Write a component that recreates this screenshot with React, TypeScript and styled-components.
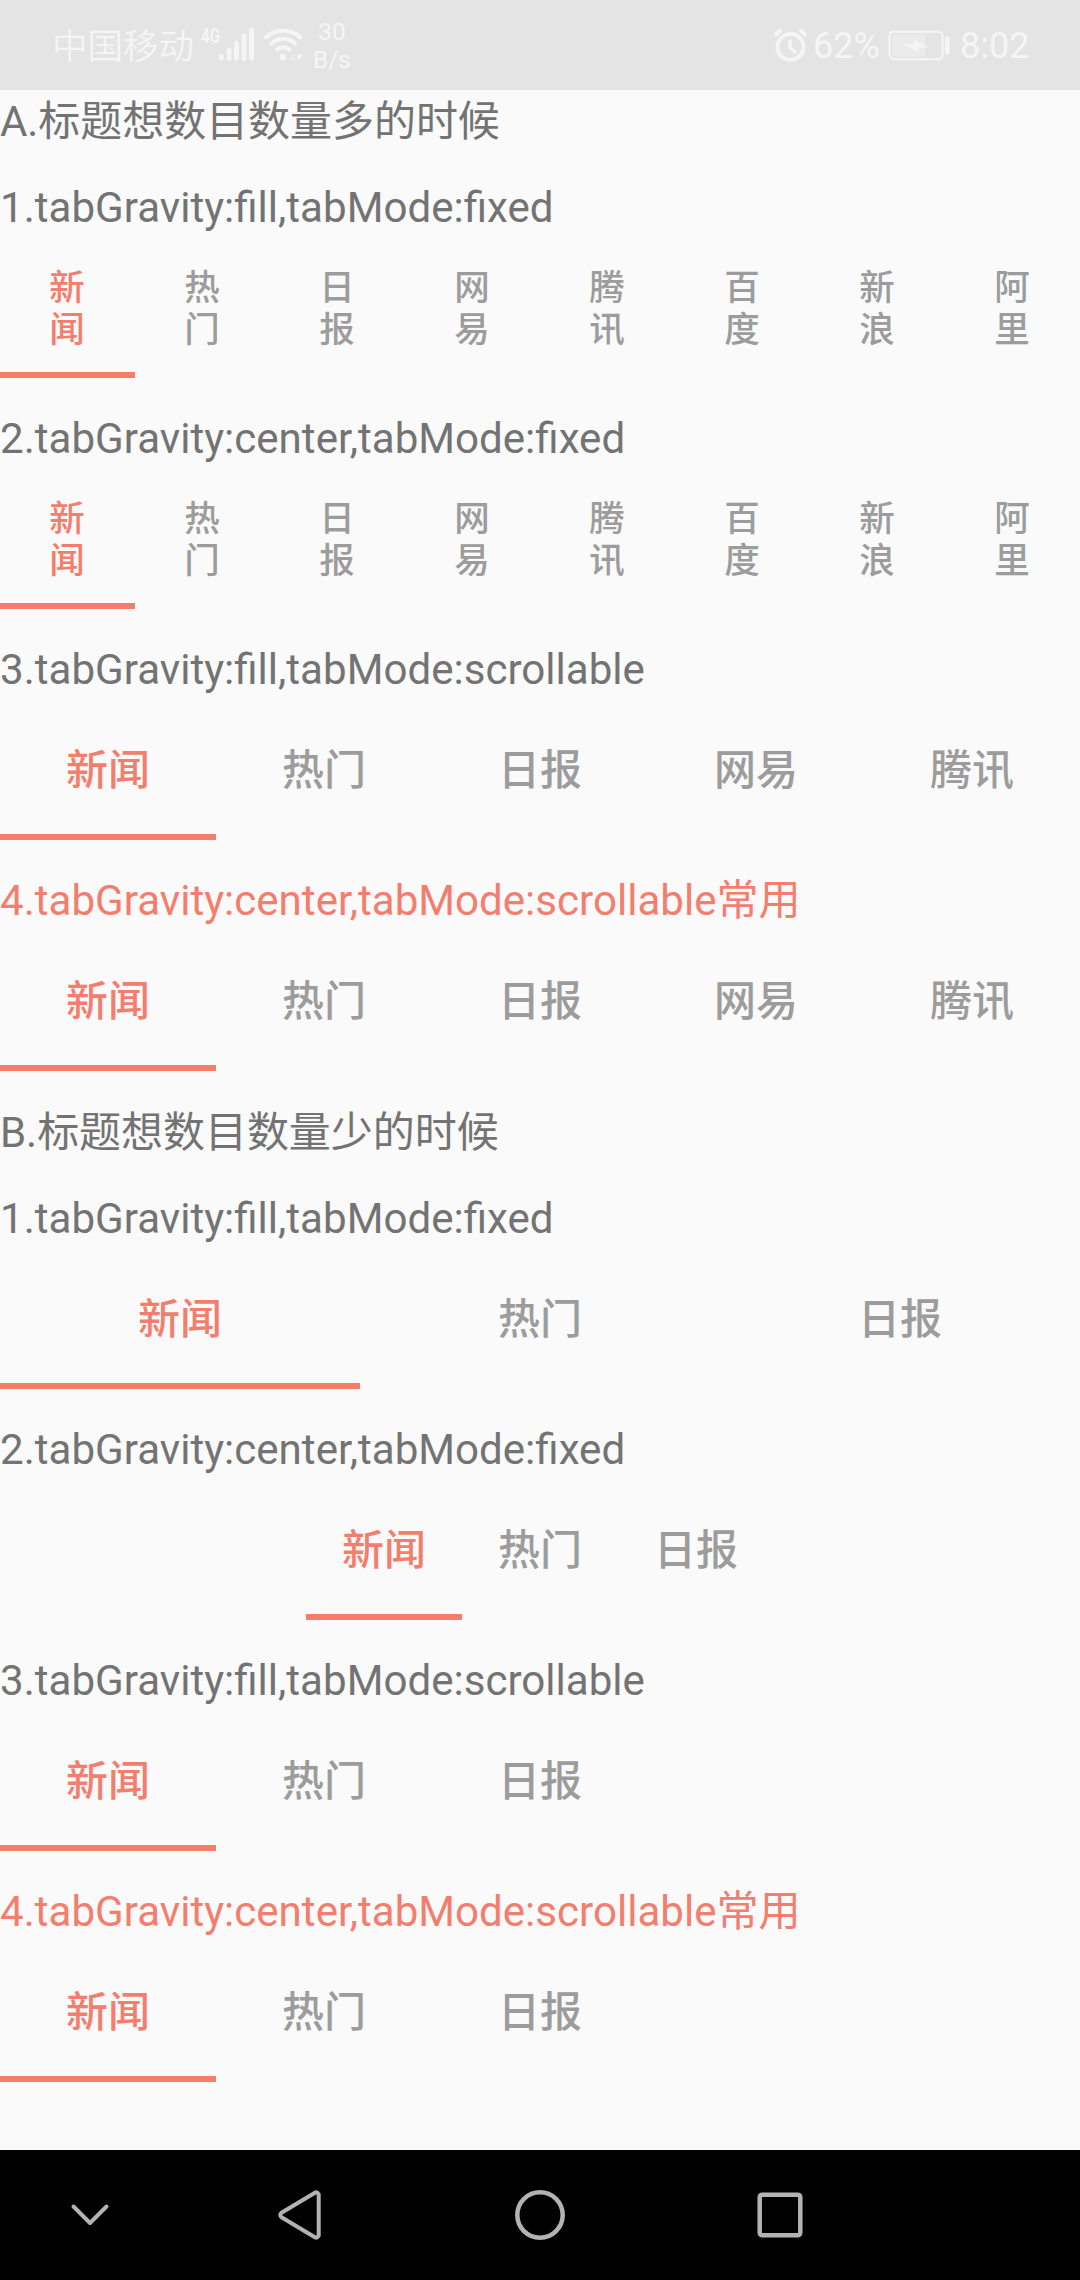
import React from "react";
import styled, { createGlobalStyle } from "styled-components";

const GlobalStyle = createGlobalStyle`
  body {
    margin: 0;
    background: #fafafa;
    font-family: Roboto, "Noto Sans CJK SC", sans-serif;
  }
`;

const Screen = styled.div`
  display: flex;
  flex-direction: column;
  width: 1080px;
  height: 2280px;
  overflow: hidden;
  background: #fafafa;
`;

const StatusBar = styled.header`
  display: flex;
  justify-content: space-between;
  flex: none;
  box-sizing: border-box;
  height: 90px;
  padding: 0 50px 0 51px;
  background: #e4e4e4;
  color: #f5f5f5;
`;

const StatusGroup = styled.div`
  display: flex;
  align-items: flex-start;
  height: 90px;
`;

const StatusText = styled.span<{ $width: number }>`
  width: ${(p) => p.$width}px;
  font-size: 36px;
  line-height: 93px;
  white-space: nowrap;
`;

const Carrier = styled(StatusText)`
  box-sizing: border-box;
  padding-left: 1px;
  font-size: 35.5px;
  line-height: 94px;
  font-weight: 350;
`;

const NetSpeed = styled.div`
  display: flex;
  flex-direction: column;
  align-items: center;
  width: 42px;
  padding-top: 18px;
  font-size: 24.5px;
  line-height: 28px;
`;

const Content = styled.main`
  flex: 1;
  min-height: 0;
`;

const Heading = styled.h2<{ $accent?: boolean }>`
  margin: 0;
  padding-top: 4px;
  height: 53px;
  font-size: 42.1px;
  line-height: 53px;
  font-weight: 400;
  white-space: nowrap;
  color: ${(p) => (p.$accent ? "#f47e6d" : "#737373")};
`;

const SectionHeading = styled(Heading)`
  padding-top: 5px;
  margin-bottom: 29px;
  font-size: 42px;
  letter-spacing: -0.05px;
`;

type Layout = "fill" | "center" | "scroll";

const TabBar = styled.nav<{ $layout: Layout }>`
  display: flex;
  justify-content: ${(p) => (p.$layout === "center" ? "center" : "flex-start")};
  height: 144px;
  margin-bottom: 30px;
`;

const Tab = styled.div<{ $layout: Layout; $active: boolean; $small: boolean }>`
  display: flex;
  align-items: center;
  justify-content: center;
  flex: ${(p) => (p.$layout === "fill" ? "1 1 0" : "none")};
  box-sizing: border-box;
  width: ${(p) => (p.$layout === "scroll" ? "216px" : "auto")};
  padding: ${(p) => (p.$small ? "12px 37px 0 36px" : "11px 36px 0")};
  border-bottom: 6px solid ${(p) => (p.$active ? "#f77d6b" : "transparent")};
  color: ${(p) => (p.$active ? "#f47e6d" : "#9c9c9c")};
  font-size: ${(p) => (p.$small ? 35.5 : 42)}px;
  line-height: ${(p) => (p.$small ? 42 : 49)}px;
  font-weight: 500;
  text-align: center;
`;

const NavBar = styled.footer`
  display: flex;
  align-items: center;
  flex: none;
  height: 130px;
  background: #000;
`;

const NavKey = styled.div<{ $width: number }>`
  display: flex;
  justify-content: center;
  width: ${(p) => p.$width}px;
`;

const SignalIcon = () => (
  <svg width="64" height="90" viewBox="195 0 64 90" fill="none">
    <text x="201" y="43" fill="#f5f5f5" fontSize="20.5" fontWeight="700" fontFamily="Roboto" textLength="19" lengthAdjust="spacingAndGlyphs">4G</text>
    <path d="M221.5 56.5v2M229 50v8.500M236.500 43v15.500M244 36v22.500M251.500 30v28.500" stroke="#f5f5f5" strokeWidth="4.800" strokeLinecap="round" />
  </svg>
);

const WifiIcon = () => (
  <svg width="52" height="90" viewBox="259 0 52 90" fill="none">
    <path d="M266 37.500a24.500 24.500 0 0 1 34.500 0M271.500 43.500a17 17 0 0 1 23.500 0M277 49.500a9.500 9.500 0 0 1 12.500 0" stroke="#f5f5f5" strokeWidth="4" strokeLinecap="round" />
    <circle cx="283" cy="57" r="3.300" fill="#f5f5f5" />
    <path d="M289 60l6-8v8z" fill="#ebebeb" />
    <path d="M297.500 54.500h5.500l-5.500 6.500z" fill="#f5f5f5" />
  </svg>
);

const AlarmIcon = () => (
  <svg width="42" height="90" viewBox="771 0 42 90" fill="none" stroke="#f5f5f5" strokeLinecap="round" strokeLinejoin="round">
    <circle cx="790.500" cy="47" r="13" strokeWidth="4" />
    <path d="M790 41v6.500l5 4.500" strokeWidth="3.500" />
    <path d="M776 34.500l4-4M805 34.500l-4-4" strokeWidth="4" />
  </svg>
);

const BatteryIcon = () => (
  <svg width="76" height="90" viewBox="884 0 76 90" fill="none">
    <rect x="889.500" y="31.800" width="53" height="27.500" rx="4" stroke="#f5f5f5" strokeWidth="2" />
    <rect x="892.500" y="34.500" width="32.500" height="22" rx="1.500" fill="#ebebeb" />
    <path d="M902.500 43.500L914 44.500L913.500 39.500L929 47.500L917.500 47.800L918 52Z" fill="#f5f5f5" />
    <rect x="945" y="36.500" width="4.500" height="18" rx="2" fill="#f5f5f5" />
  </svg>
);

const ChevronKey = () => (
  <svg width="44" height="50" viewBox="0 0 44 50" fill="none">
    <path d="M5.500 16.500L22 33l16.500-16.500" stroke="#b3b3b3" strokeWidth="4" strokeLinecap="round" strokeLinejoin="round" />
  </svg>
);

const BackKey = () => (
  <svg width="44" height="50" viewBox="278 0 44 50" fill="none">
    <path d="M318.700 4.200Q317 1.500 314.500 3L281.500 22.700Q279 25 281.500 27.300L314.500 47Q317 48.500 318.700 45.800Z" stroke="#b3b3b3" strokeWidth="4" strokeLinejoin="round" />
  </svg>
);

const HomeKey = () => (
  <svg width="50" height="50" viewBox="0 0 50 50" fill="none">
    <circle cx="25" cy="25" r="22.700" stroke="#b3b3b3" strokeWidth="4.500" />
  </svg>
);

const RecentKey = () => (
  <svg width="46" height="46" viewBox="0 0 46 46" fill="none">
    <rect x="2.700" y="2.700" width="40.600" height="40.600" rx="2.500" stroke="#b3b3b3" strokeWidth="4.500" />
  </svg>
);

const manyTabs = ["新闻", "热门", "日报", "网易", "腾讯", "百度", "新浪", "阿里"];
const fewTabs = ["新闻", "热门", "日报"];

interface TabDemoProps {
  title: string;
  tabs: string[];
  layout: Layout;
  accent?: boolean;
  small?: boolean;
}

const TabDemo = ({ title, tabs, layout, accent, small = false }: TabDemoProps) => (
  <section>
    <Heading $accent={accent}>{title}</Heading>
    <TabBar $layout={layout}>
      {tabs.map((tab, i) => (
        <Tab key={tab} $layout={layout} $active={i === 0} $small={small}>
          {tab}
        </Tab>
      ))}
    </TabBar>
  </section>
);

export default function App() {
  return (
    <Screen>
      <GlobalStyle />
      <StatusBar>
        <StatusGroup>
          <Carrier $width={144}>中国移动</Carrier>
          <SignalIcon />
          <WifiIcon />
          <NetSpeed>
            <span>30</span>
            <span>B/s</span>
          </NetSpeed>
        </StatusGroup>
        <StatusGroup>
          <AlarmIcon />
          <StatusText $width={71}>62%</StatusText>
          <BatteryIcon />
          <StatusText $width={70}>8:02</StatusText>
        </StatusGroup>
      </StatusBar>
      <Content>
        <SectionHeading>A.标题想数目数量多的时候</SectionHeading>
        <TabDemo title="1.tabGravity:fill,tabMode:fixed" tabs={manyTabs} layout="fill" small />
        <TabDemo title="2.tabGravity:center,tabMode:fixed" tabs={manyTabs} layout="fill" small />
        <TabDemo title="3.tabGravity:fill,tabMode:scrollable" tabs={manyTabs.slice(0, 5)} layout="scroll" />
        <TabDemo title="4.tabGravity:center,tabMode:scrollable常用" tabs={manyTabs.slice(0, 5)} layout="scroll" accent />
        <SectionHeading>B.标题想数目数量少的时候</SectionHeading>
        <TabDemo title="1.tabGravity:fill,tabMode:fixed" tabs={fewTabs} layout="fill" />
        <TabDemo title="2.tabGravity:center,tabMode:fixed" tabs={fewTabs} layout="center" />
        <TabDemo title="3.tabGravity:fill,tabMode:scrollable" tabs={fewTabs} layout="scroll" />
        <TabDemo title="4.tabGravity:center,tabMode:scrollable常用" tabs={fewTabs} layout="scroll" accent />
      </Content>
      <NavBar>
        <NavKey $width={180}><ChevronKey /></NavKey>
        <NavKey $width={240}><BackKey /></NavKey>
        <NavKey $width={240}><HomeKey /></NavKey>
        <NavKey $width={240}><RecentKey /></NavKey>
      </NavBar>
    </Screen>
  );
}
